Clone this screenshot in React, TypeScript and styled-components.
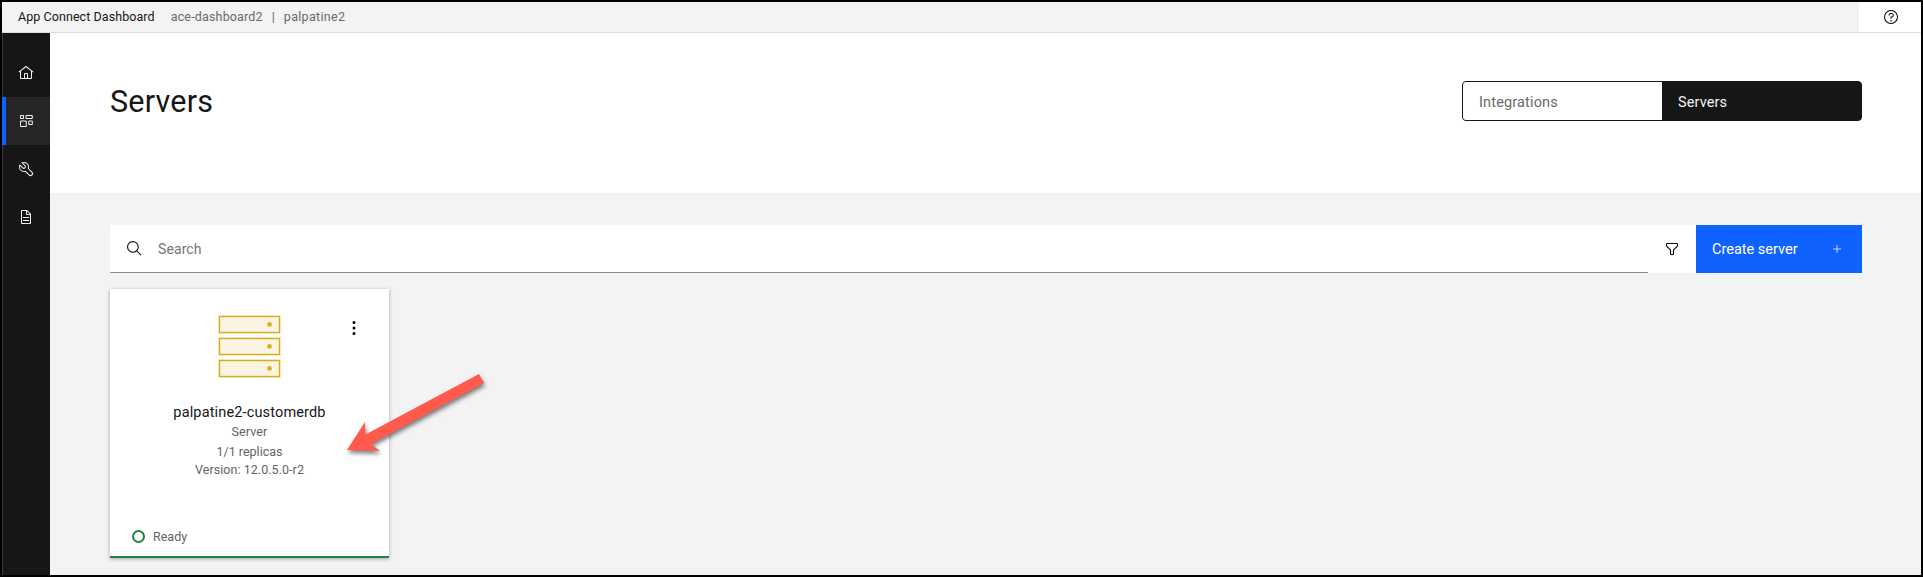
import React from "react";
import styled, { createGlobalStyle } from "styled-components";

const GlobalStyle = createGlobalStyle`
  * { box-sizing: border-box; }
  body { margin: 0; background: #000; font-family: Roboto, "Liberation Sans", sans-serif; color: #161616; }
  svg { display: block; }
`;

const Frame = styled.div`
  display: flex;
  flex-direction: column;
  width: 1923px;
  height: 577px;
  border: 2px solid #000;
  background: #f3f3f3;
  position: relative;
  overflow: hidden;
`;

const Text = styled.span<{ $size?: number; $track?: number; $line?: number; $tone?: string }>`
  display: block;
  white-space: nowrap;
  font-size: ${(p) => p.$size ?? 14}px;
  letter-spacing: ${(p) => p.$track ?? 0}px;
  line-height: ${(p) => p.$line ?? 18}px;
  color: ${(p) => p.$tone ?? "#161616"};
`;

const Header = styled.header`
  display: flex;
  height: 31px;
  flex: none;
  border-bottom: 1px solid #dcdcdc;
`;

const Breadcrumb = styled.div`
  display: flex;
  flex: 1;
  padding: 6px 0 0 16px;
`;

const Context = styled.div`
  display: flex;
  gap: 9px;
  margin-left: 16px;
`;

const HelpButton = styled.button`
  display: flex;
  align-items: center;
  width: 62px;
  border: 0;
  padding: 0 0 0 24px;
  background: #fff;
`;

const Body = styled.div`
  display: flex;
  flex: 1;
`;

const Sidebar = styled.nav`
  width: 48px;
  padding-top: 16px;
  background: #161616;
  border-left: 1px solid #393939;
`;

const NavItem = styled.a<{ $active?: boolean }>`
  display: flex;
  align-items: center;
  height: 48px;
  margin-left: -1px;
  padding-left: 12px;
  color: #f4f4f4;
  border-left: 4px solid ${(p) => (p.$active ? "#0f62fe" : "transparent")};
  background: ${(p) => (p.$active ? "#262626" : "transparent")};
  background-clip: padding-box;
`;

const Main = styled.main`
  flex: 1;
`;

const TitleBar = styled.section`
  display: flex;
  justify-content: space-between;
  height: 160px;
  padding: 48px 59px 0 60px;
  background: #fff;
`;

const Title = styled.h1`
  margin: 0;
  font-size: 30.5px;
  font-weight: 400;
  line-height: 42px;
  letter-spacing: 0.2px;
`;

const Switcher = styled.div`
  display: flex;
  width: 400px;
  height: 40px;
  border: 1px solid #161616;
  border-radius: 4px;
  background: #161616;
`;

const SwitchOption = styled.button<{ $selected?: boolean }>`
  display: flex;
  align-items: center;
  flex: 1;
  border: 0;
  border-radius: 3px 0 0 3px;
  padding: 3px 16px 0;
  font-family: inherit;
  background: ${(p) => (p.$selected ? "transparent" : "#fff")};
`;

const Content = styled.section`
  padding: 32px 59px 0 60px;
`;

const Toolbar = styled.div`
  display: flex;
  height: 48px;
`;

const SearchField = styled.div`
  display: flex;
  align-items: center;
  flex: 1;
  gap: 15px;
  padding-left: 16px;
  background: #fff;
  border-bottom: 1px solid #8d8d8d;
`;

const FilterButton = styled.button`
  display: grid;
  place-items: center;
  width: 48px;
  border: 0;
  padding: 0;
  background: #fff;
`;

const CreateButton = styled.button`
  display: flex;
  align-items: flex-start;
  justify-content: space-between;
  width: 166px;
  border: 0;
  padding: 16px 17px 0 16px;
  font-family: inherit;
  color: #c4d8ff;
  background: #0f62fe;
`;

const Card = styled.article`
  display: flex;
  flex-direction: column;
  width: 279px;
  height: 269px;
  margin-top: 16px;
  background: #fff;
  border-bottom: 2px solid #24813a;
  box-shadow: 0 1px 4px rgba(0, 0, 0, 0.32);
`;

const CardTop = styled.div`
  display: grid;
  grid-template-columns: 1fr 64px 1fr;
  height: 115px;
  padding: 26px 1px 0 0;
`;

const MenuButton = styled.button`
  justify-self: start;
  align-self: start;
  margin: 5px 0 0 65px;
  border: 0;
  padding: 0;
  background: none;
`;

const Details = styled.div`
  display: flex;
  flex-direction: column;
  align-items: center;
`;

const Status = styled.div`
  display: flex;
  align-items: center;
  gap: 8px;
  margin: auto 0 10px 22px;
`;

const Ring = styled.i`
  width: 13px;
  height: 13px;
  margin-bottom: 1px;
  border: 2px solid #24813a;
  border-radius: 50%;
`;

const Pointer = styled.svg`
  position: absolute;
  left: 328px;
  top: 358px;
`;

const Icon = ({ d, size = 16 }: { d: string; size?: number }) => (
  <svg width={size} height={size} viewBox="0 0 32 32" fill="currentColor">
    <path d={d} />
  </svg>
);

const paths = {
  home: "M16.6123,2.2138a1.01,1.01,0,0,0-1.2427,0L1,13.4194l1.2427,1.5717L4,13.6209V26a2.0041,2.0041,0,0,0,2,2H26a2.0037,2.0037,0,0,0,2-2V13.63L29.7573,15,31,13.4282ZM18,26H14V18h4Zm2,0V18a2.0023,2.0023,0,0,0-2-2H14a2.002,2.002,0,0,0-2,2v8H6V12.0615l10-7.79,10,7.8005V26Z",
  search: "M29,27.5859l-7.5521-7.5521a11.0177,11.0177,0,1,0-1.4141,1.4141L27.5859,29ZM4,13a9,9,0,1,1,9,9A9.01,9.01,0,0,1,4,13Z",
  document: "M25.7,9.3l-7-7C18.5,2.1,18.3,2,18,2H8C6.9,2,6,2.9,6,4v24c0,1.1,0.9,2,2,2h16c1.1,0,2-0.9,2-2V10C26,9.7,25.9,9.5,25.7,9.3zM18,4.4l5.6,5.6H18V4.4zM24,28H8V4h8v6c0,1.1,0.9,2,2,2h6V28zM10 22H22V24H10zM10 16H22V18H10z",
  filter: "M18,28H14a2,2,0,0,1-2-2V18.41L4.59,11A2,2,0,0,1,4,9.59V6A2,2,0,0,1,6,4H26a2,2,0,0,1,2,2V9.59A2,2,0,0,1,27.41,11L20,18.41V26A2,2,0,0,1,18,28ZM6,6V9.59l8,8V26h4V17.59l8-8V6Z",
  help: "M16,2A14,14,0,1,0,30,16,14,14,0,0,0,16,2Zm0,26A12,12,0,1,1,28,16,12,12,0,0,1,16,28ZM16 22a1.5 1.5 0 1 0 0 3a1.5 1.5 0 1 0 0-3ZM17,8H15.5A4.49,4.49,0,0,0,11,12.5V13h2v-.5A2.5,2.5,0,0,1,15.5,10H17a2.5,2.5,0,0,1,0,5H15v4.5h2V17a4.5,4.5,0,0,0,0-9Z",
  tools: "M12.1 2a9.8 9.8 0 0 0-5.4 1.6l6.4 6.4a2.1 2.1 0 0 1 .2 3 2.1 2.1 0 0 1-3-.2L3.7 6.4A9.84 9.84 0 0 0 2 12.1 10.14 10.14 0 0 0 12.1 22.2a10.9 10.9 0 0 0 2.6-.3l6.7 6.7a5 5 0 0 0 7.1-7.1l-6.7-6.7a10.9 10.9 0 0 0 .3-2.6A10 10 0 0 0 12.1 2zm8 10.1a7.61 7.61 0 0 1-.3 2.1l-.3 1.1.8.8 6.7 6.7a2.88 2.88 0 0 1 .9 2.1A2.72 2.72 0 0 1 27 27a2.9 2.9 0 0 1-4.2 0l-6.7-6.7-.8-.8-1.1.3a7.61 7.61 0 0 1-2.1.3 8.27 8.27 0 0 1-5.7-2.3A7.63 7.63 0 0 1 4 12.1a8.33 8.33 0 0 1 .3-2.2l4.4 4.4a4.14 4.14 0 0 0 5.9.2 4.14 4.14 0 0 0-.2-5.9L10 4.2a6.45 6.45 0 0 1 2-.3 8.27 8.27 0 0 1 5.7 2.3 8.49 8.49 0 0 1 2.4 5.9z",
  add: "M17,15V8H15v7H8v2h7v7h2V17h7V15Z",
};

const DashboardIcon = () => (
  <svg width="16" height="16" viewBox="0 0 16 16" fill="none" stroke="currentColor">
    <path d="M2.5 2.5h3v3h-3zM8 2.5h6.3v3H8zM2.5 8h5.8v5.5H2.5zM10.8 8h3.5v3.5h-3.5z" />
  </svg>
);

const ServerIcon = () => (
  <svg width="64" height="64" viewBox="0 0 64 64">
    {[1.5, 23.5, 45.5].map((y) => (
      <g key={y}>
        <rect x="2.5" y={y} width="60" height="16" fill="#faf5e3" stroke="#f3e6b8" strokeWidth="3" />
        <rect x="2.5" y={y} width="60" height="16" fill="none" stroke="#d9ab16" />
        <circle cx="52.5" cy={y + 7.9} r="2.4" fill="#ddb01c" />
      </g>
    ))}
  </svg>
);

export default function App() {
  return (
    <Frame>
      <GlobalStyle />
      <Header>
        <Breadcrumb>
          <Text $size={12.5} $track={0.07}>App Connect Dashboard</Text>
          <Context>
            <Text $size={12.5} $track={0.17} $tone="#6a6a6a">ace-dashboard2</Text>
            <Text $size={12.5} $tone="#6a6a6a">|</Text>
            <Text $size={12.5} $track={0.3} $tone="#6a6a6a">palpatine2</Text>
          </Context>
        </Breadcrumb>
        <HelpButton><Icon d={paths.help} /></HelpButton>
      </Header>
      <Body>
        <Sidebar>
          <NavItem><Icon d={paths.home} /></NavItem>
          <NavItem $active><DashboardIcon /></NavItem>
          <NavItem><Icon d={paths.tools} /></NavItem>
          <NavItem><Icon d={paths.document} /></NavItem>
        </Sidebar>
        <Main>
          <TitleBar>
            <Title>Servers</Title>
            <Switcher>
              <SwitchOption><Text $size={14.5} $track={0.15} $tone="#6a6a6a">Integrations</Text></SwitchOption>
              <SwitchOption $selected><Text $size={14.5} $track={0.1} $tone="#f4f4f4">Servers</Text></SwitchOption>
            </Switcher>
          </TitleBar>
          <Content>
            <Toolbar>
              <SearchField>
                <Icon d={paths.search} size={17} />
                <Text $size={14} $track={0.1} $tone="#757575">Search</Text>
              </SearchField>
              <FilterButton><Icon d={paths.filter} /></FilterButton>
              <CreateButton>
                <Text $size={14.5} $tone="#fff">Create server</Text>
                <Icon d={paths.add} />
              </CreateButton>
            </Toolbar>
            <Card>
              <CardTop>
                <span />
                <ServerIcon />
                <MenuButton aria-label="Server actions">
                  <svg width="16" height="16" viewBox="0 0 16 16">
                    <circle cx="8" cy="2.5" r="1.5" /><circle cx="8" cy="8" r="1.5" /><circle cx="8" cy="13.5" r="1.5" />
                  </svg>
                </MenuButton>
              </CardTop>
              <Details>
                <Text $size={14.5} $track={0.15} $line={18}>palpatine2-customerdb</Text>
                <Text $size={12.5} $track={0.1} $line={20} $tone="#636363">Server</Text>
                <Text $size={12.5} $line={20} $tone="#636363">1/1 replicas</Text>
                <Text $size={12.5} $track={0.05} $line={15} $tone="#636363">Version: 12.0.5.0-r2</Text>
              </Details>
              <Status>
                <Ring />
                <Text $size={12.5} $line={18} $tone="#636363">Ready</Text>
              </Status>
            </Card>
          </Content>
        </Main>
      </Body>
      <Pointer width="170" height="110" viewBox="0 0 170 110">
        <path
          d="M17 90L35 62L35.5 74.5L149 14L154 23L41 84L50 91Z"
          fill="#ff5a4b"
          style={{ filter: "drop-shadow(1px 3px 2px rgba(0,0,0,.5))" }}
        />
      </Pointer>
    </Frame>
  );
}
